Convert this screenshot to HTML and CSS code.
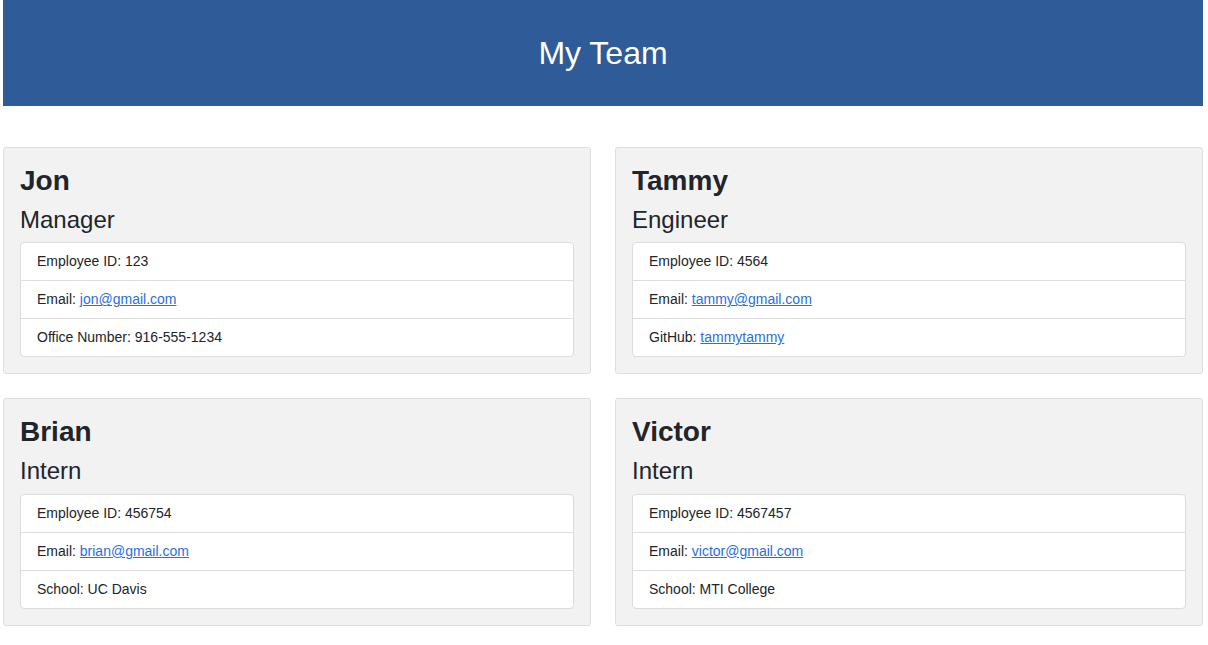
FILE: index.html
```html
<!DOCTYPE html>
<html lang="en">
<head>
<meta charset="utf-8">
<title>My Team</title>
<link rel="stylesheet" href="styles.css">
</head>
<body>
<div class="page">
  <header class="banner"><h1 class="banner-title">My Team</h1></header>
  <main class="grid">
    <section class="card">
      <h2 class="name">Jon</h2>
      <h3 class="role">Manager</h3>
      <ul class="list">
        <li class="item">Employee ID: 123</li>
        <li class="item">Email: <a href="#">jon@gmail.com</a></li>
        <li class="item">Office Number: 916-555-1234</li>
      </ul>
    </section>
    <section class="card">
      <h2 class="name">Tammy</h2>
      <h3 class="role">Engineer</h3>
      <ul class="list">
        <li class="item">Employee ID: 4564</li>
        <li class="item">Email: <a href="#">tammy@gmail.com</a></li>
        <li class="item">GitHub: <a href="#">tammytammy</a></li>
      </ul>
    </section>
    <section class="card">
      <h2 class="name">Brian</h2>
      <h3 class="role">Intern</h3>
      <ul class="list">
        <li class="item">Employee ID: 456754</li>
        <li class="item">Email: <a href="#">brian@gmail.com</a></li>
        <li class="item">School: UC Davis</li>
      </ul>
    </section>
    <section class="card">
      <h2 class="name">Victor</h2>
      <h3 class="role">Intern</h3>
      <ul class="list">
        <li class="item">Employee ID: 4567457</li>
        <li class="item">Email: <a href="#">victor@gmail.com</a></li>
        <li class="item">School: MTI College</li>
      </ul>
    </section>
  </main>
</div>
</body>
</html>
```
FILE: styles.css
```css
* { box-sizing: border-box; }
html, body { margin: 0; padding: 0; background: #fff; }
body {
  font-family: "Liberation Sans", Arial, sans-serif;
  color: #212529;
  font-size: 14px;
}
.page {
  width: 1200px;
  margin-left: 3px;
}
.banner {
  height: 106px;
  background: #2f5b99;
  display: flex;
  align-items: center;
  justify-content: center;
}
.banner-title {
  margin: 0;
  color: #fff;
  font-weight: 400;
  font-size: 32px;
  line-height: 1.2;
}
.grid {
  display: grid;
  grid-template-columns: 588px 588px;
  column-gap: 24px;
  row-gap: 24px;
  margin-top: 41px;
}
.card {
  background: #f2f2f2;
  border: 1px solid #dedede;
  border-radius: 3px;
  padding: 16px;
}
.name {
  margin: 0 0 8px;
  font-size: 28px;
  font-weight: 700;
  line-height: 1.2;
}
.role {
  margin: 0 0 8px;
  font-size: 24px;
  font-weight: 400;
  line-height: 1.2;
}
.list {
  list-style: none;
  margin: 0;
  padding: 0;
  background: #fff;
  border: 1px solid #dcdcdc;
  border-radius: 4px;
}
.item {
  height: 38px;
  display: flex;
  align-items: center;
  padding: 0 16px 1px;
  font-size: 14px;
  border-top: 1px solid #dcdcdc;
  white-space: pre;
}
.item:first-child { border-top: none; height: 37px; }
.item a { color: #2a6fdb; text-decoration: underline; }
```
